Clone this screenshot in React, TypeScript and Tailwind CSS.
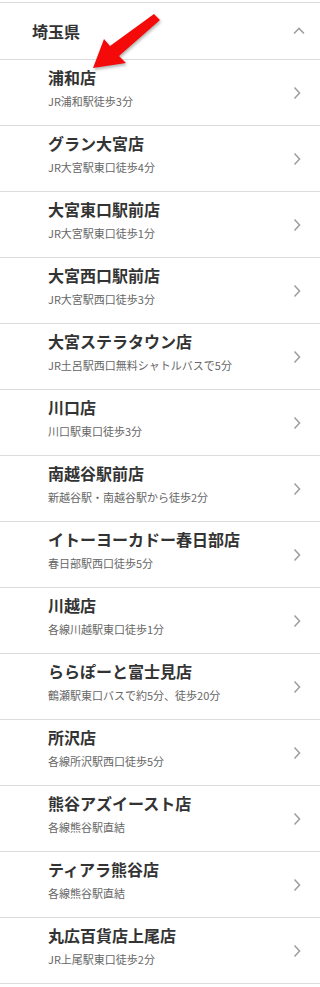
import React from 'react'

const stores: { name: string; access: string }[] = [
  { name: '浦和店', access: 'JR浦和駅徒歩3分' },
  { name: 'グラン大宮店', access: 'JR大宮駅東口徒歩4分' },
  { name: '大宮東口駅前店', access: 'JR大宮駅東口徒歩1分' },
  { name: '大宮西口駅前店', access: 'JR大宮駅西口徒歩3分' },
  { name: '大宮ステラタウン店', access: 'JR土呂駅西口無料シャトルバスで5分' },
  { name: '川口店', access: '川口駅東口徒歩3分' },
  { name: '南越谷駅前店', access: '新越谷駅・南越谷駅から徒歩2分' },
  { name: 'イトーヨーカドー春日部店', access: '春日部駅西口徒歩5分' },
  { name: '川越店', access: '各線川越駅東口徒歩1分' },
  { name: 'ららぽーと富士見店', access: '鶴瀬駅東口バスで約5分、徒歩20分' },
  { name: '所沢店', access: '各線所沢駅西口徒歩5分' },
  { name: '熊谷アズイースト店', access: '各線熊谷駅直結' },
  { name: 'ティアラ熊谷店', access: '各線熊谷駅直結' },
  { name: '丸広百貨店上尾店', access: 'JR上尾駅東口徒歩2分' },
]

const Chevron = ({ up }: { up?: boolean }) => (
  <svg width="14" height="14" viewBox="0 0 14 14" fill="none" stroke="#a0a0a0" strokeWidth="1.6">
    {up ? <polyline points="2,9.5 7,4.5 12,9.5" /> : <polyline points="4.5,1.5 9.5,7 4.5,12.5" />}
  </svg>
)

const StoreRow = ({ name, access }: { name: string; access: string }) => (
  <a href="#" className="flex h-[66px] items-center border-b border-[#dcdcdc] pl-12 pr-4">
    <div className="flex-1 self-start pt-[7px]">
      <div className="text-[16px] font-bold leading-[20px] text-[#333]">{name}</div>
      <div className="mt-[6px] text-[11px] leading-[16px] text-[#666]">{access}</div>
    </div>
    <Chevron />
  </a>
)

export default function App() {
  return (
    <div
      className="relative min-h-[987px] w-[320px] bg-white pt-[2px]"
      style={{ fontFamily: '"Noto Sans CJK JP", "Noto Sans", sans-serif' }}
    >
      <div className="border-t border-[#dcdcdc]">
        <div className="flex h-[57px] items-center justify-between border-b border-[#dcdcdc] pl-8 pr-[14px]">
          <span className="text-[16px] font-bold text-[#333]">埼玉県</span>
          <Chevron up />
        </div>
        {stores.map((s) => (
          <StoreRow key={s.name} name={s.name} access={s.access} />
        ))}
      </div>
      <svg
        className="pointer-events-none absolute left-0 top-0"
        width="320"
        height="90"
        style={{ filter: 'drop-shadow(1px 2px 1.5px rgba(0,0,0,0.3))' }}
      >
        <polygon
          points="93,68 104,39 110,46 154,14 160,20 119,56 126,63"
          fill="#f50a0a"
        />
      </svg>
    </div>
  )
}
